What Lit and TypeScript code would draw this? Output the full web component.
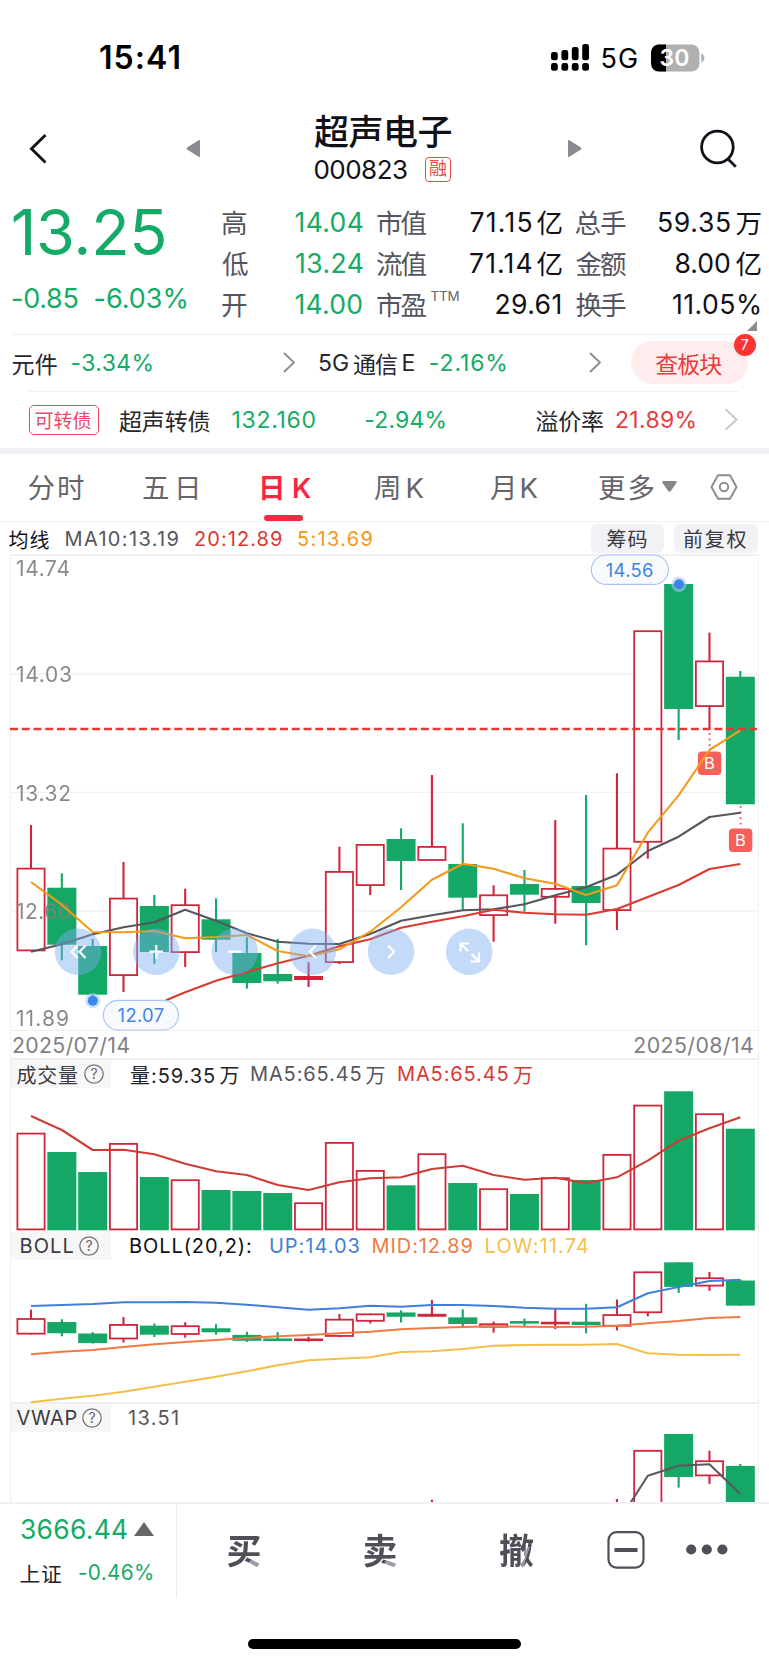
import { LitElement, html, svg, css } from "lit";
import { customElement, property } from "lit/decorators.js";

/* One line of text tracked so that its ink fills a given measure. */
@customElement("fit-text")
class FitText extends LitElement {
  @property() text = "";
  @property({ type: Number }) measure = 0;
  @property({ type: Number }) gap = 0;

  static styles = css`
    :host {
      display: block;
      flex: none;
      white-space: nowrap;
    }
  `;

  updated() {
    const ctx = document.createElement("canvas").getContext("2d")!;
    const cs = getComputedStyle(this);
    ctx.font = `${cs.fontWeight} ${cs.fontSize} ${cs.fontFamily}`;
    const m = ctx.measureText(this.text);
    const ink = m.actualBoundingBoxLeft + m.actualBoundingBoxRight;
    const n = Array.from(this.text).length;
    this.style.width = `${this.measure}px`;
    this.style.marginLeft = `${this.gap}px`;
    this.style.textIndent = `${m.actualBoundingBoxLeft}px`;
    this.style.letterSpacing = n > 1 ? `${(this.measure - ink) / (n - 1)}px` : "0";
  }

  render() {
    return html`${this.text}`;
  }
}

type Item = [string, number, number, string];

/* A run of texts; each item is [text, left, right, class]. */
const run = (items: Item[], start = 0) => {
  let end = start;
  return items.map(([text, l, r, cls]) => {
    const gap = l - end;
    end = r;
    return html`<fit-text class=${cls} .text=${text} .measure=${r - l} .gap=${gap}></fit-text>`;
  });
};

const UP = "#d0263c";
const DOWN = "#14a765";
const STEP = 30.84;
const cx = (i: number) => 31 + STEP * i;

/* rising?, body top, body bottom, high, low */
const CANDLES: [boolean, number, number, number, number][] = [
  [true, 867.7, 951.3, 825, 951.3],
  [false, 887.7, 944.7, 873.3, 960.3],
  [false, 946, 994.7, 939, 997],
  [true, 897.7, 976, 862, 992],
  [false, 906, 952, 895, 963.7],
  [true, 904.3, 953, 888.7, 967],
  [false, 919.3, 939.7, 898.3, 952],
  [false, 953, 983, 937.3, 988.7],
  [false, 974, 981.3, 939, 983.7],
  [true, 976, 980, 962.3, 987],
  [true, 871, 963, 846.7, 964],
  [true, 844, 886, 844, 895],
  [false, 839, 861, 828.3, 890],
  [true, 846, 860.9, 775, 860],
  [false, 864, 897.7, 823.3, 911],
  [true, 894.4, 916, 885.3, 941.7],
  [false, 884, 894.7, 870, 911.7],
  [true, 888, 897.7, 820, 923.7],
  [false, 886, 903, 795, 945.3],
  [true, 847.7, 911, 773.3, 930],
  [true, 630.3, 842.7, 631, 858.7],
  [false, 584, 709, 584, 740],
  [true, 660.5, 707, 632.7, 729],
  [false, 676.7, 804.3, 671, 804],
];

const MA5 = [882, 904.7, 932, 932.3, 931, 938.3, 937, 935, 951, 956.3, 949.3, 931.7, 907.3, 879.7, 863.7, 868.7, 878.3, 883.7, 895, 885.3, 832.7, 795.3, 750, 730.3];
const MA10 = [951.7, 944.3, 934.3, 927.3, 922.3, 909.7, 920.7, 933.3, 941.7, 943.7, 944, 934, 920.7, 915.3, 910.3, 909.3, 904.3, 895.3, 887.3, 874.7, 851, 836.7, 817, 812.7];
const MA20 = [992.3, 980.7, 972, 963.3, 955.7, 946.3, 939.3, 927.7, 921.7, 916.3, 909.7, 912.7, 914.3, 914.7, 909, 897, 885, 869, 864];

const VOLUME = [1132.7, 1152, 1172, 1143, 1177, 1179.3, 1190, 1191, 1193, 1202.3, 1142, 1170, 1185.3, 1153.3, 1183, 1188.3, 1194, 1177.3, 1180, 1154, 1104.7, 1091.3, 1113.3, 1128.7];
const VOLUME_MA = [1116, 1130, 1150, 1149.7, 1154.3, 1163.7, 1171.3, 1175, 1185, 1190, 1182.3, 1178.3, 1177.3, 1169, 1165.7, 1175, 1179.7, 1177.7, 1183, 1177.3, 1160.7, 1140.7, 1128.3, 1117.3];

const BOLL_UP = [1306, 1305, 1304, 1302.3, 1302.3, 1302, 1302.7, 1304.7, 1307.3, 1309.7, 1308.3, 1305.7, 1306.7, 1305, 1305, 1306, 1307.7, 1308.7, 1308.7, 1307.3, 1293.3, 1287, 1281, 1279.7];
const BOLL_MID = [1354.3, 1351.7, 1350, 1347, 1344.3, 1342, 1340, 1338, 1336.3, 1335, 1333.3, 1331.7, 1329.3, 1328, 1327, 1326.3, 1326.7, 1327, 1326.7, 1325.7, 1323.3, 1321, 1318, 1317];
const BOLL_LOW = [1402.3, 1398.7, 1395.7, 1391.7, 1386.7, 1381.7, 1376.7, 1371.3, 1365.3, 1360.3, 1358.7, 1357.3, 1352, 1351.3, 1349, 1345.7, 1345, 1344.7, 1344.7, 1344, 1353.3, 1354.7, 1355, 1354.7];

const path = (ys: number[], color: string, first = 0, head = "") => svg`
  <polyline points=${head + ys.map((y, i) => `${cx(i + first).toFixed(1)},${y}`).join(" ")}
    fill="none" stroke=${color} stroke-width="2.1" stroke-linejoin="round"></polyline>`;

const box = (i: number, rising: boolean, top: number, bottom: number) => {
  const x = cx(i) - 14.5;
  const h = bottom - top;
  if (rising && h > 4.2) {
    return svg`<rect x=${x + 0.9} y=${top + 0.9} width="27.2" height=${h - 1.8} fill="#fff" stroke=${UP} stroke-width="1.8"></rect>`;
  }
  const thick = Math.max(h, 2.6);
  return svg`<rect x=${x} y=${(top + bottom - thick) / 2} width="29" height=${thick} fill=${rising ? UP : DOWN}></rect>`;
};

const candles = (map: (y: number) => number) =>
  CANDLES.map(([rising, top, bottom, high, low], i) => svg`
    <path d="M${cx(i)} ${map(high)}V${map(low)}" stroke=${rising ? UP : DOWN} stroke-width="2.1"></path>
    ${box(i, rising, map(top), map(bottom))}`);

const label = (text: string, x: number, y: number, w: number, size: number, fill: string) => svg`
  <text x=${x} y=${y} textLength=${w} font-size=${size} fill=${fill}>${text}</text>`;

const TOOLS: [number, string][] = [
  [78, "M77.5 945.5L71.5 951.7L77.5 958M85.5 945.5L79.5 951.7L85.5 958"],
  [156.3, "M149.5 951.7H163M156.3 945V958.4"],
  [234.7, "M228 951.7H241.4"],
  [312.7, "M316 945.5L309.8 951.7L316 958"],
  [391, "M388 945.5L394 951.7L388 958"],
  [469.2, "M460.5 951.5V943.5H469M461 944L468 951M479 952.5V961.5H470.5M478.5 961L471.5 954"],
];

const marker = (x: number, y: number, from: number, to: number) => svg`
  <path d="M${x} ${from}V${to}" stroke="#ea4f4f" stroke-width="1.8" stroke-dasharray="1.8 3.8"></path>
  <rect x=${x - 11.7} y=${y} width="23.4" height="23.6" rx="4" fill="#f5605a"></rect>
  <text x=${x - 0.2} y=${y + 17.8} text-anchor="middle" font-size="16.5" fill="#fff">B</text>`;

const dot = (x: number, y: number) => svg`
  <circle cx=${x} cy=${y} r="7.6" fill="#a9caf8" fill-opacity=".6"></circle>
  <circle cx=${x} cy=${y} r="5" fill="#3b86ea"></circle>`;

const mainChart = html`
  <svg class="pane" viewBox="11 555 747 475" width="747" height="475">
    <path d="M11 674H758M11 792.4H758M11 911H758" stroke="#f2f2f2" stroke-width="1.3"></path>
    ${candles((y) => y)}
    <g opacity=".92">
      ${label("14.74", 16, 576, 54, 21, "#808080")}
      ${label("14.03", 16, 681.6, 56, 21, "#808080")}
      ${label("13.32", 16, 800.6, 55, 21, "#808080")}
      ${label("12.60", 16, 919.3, 55, 21, "#808080")}
      ${label("11.89", 16, 1025.5, 53, 21, "#808080")}
    </g>
    ${marker(709.6, 751.4, 733, 751)}
    ${marker(740.6, 828.4, 806, 828)}
    <path d="M10 729H757" stroke="#e23c32" stroke-width="2.4" stroke-dasharray="8 3.74"></path>
    ${path(MA10, "#55555d")}
    ${path(MA20, "#da3a30", 5, "166,1000.3 ")}
    ${path(MA5, "#f39a1b")}
    ${TOOLS.map(([x, d]) => svg`
      <circle cx=${x} cy="951.7" r="23.3" fill="#7cadf1" fill-opacity=".45"></circle>
      <path d=${d} fill="none" stroke="#fff" stroke-width="2.2"></path>`)}
    <rect x="591.4" y="555" width="77" height="29.4" rx="14.7" fill="#f8f9fb" stroke="#a5c5f3" stroke-width="1.1"></rect>
    ${label("14.56", 605.8, 577, 47.6, 18.4, "#3f86e4")}
    <rect x="103.4" y="1000.4" width="75" height="29.6" rx="14.8" fill="#f8f9fb" stroke="#a5c5f3" stroke-width="1.1"></rect>
    ${label("12.07", 117.6, 1022.3, 46.5, 18.4, "#3f86e4")}
    ${dot(679, 584.3)}${dot(92.8, 1000.7)}
  </svg>`;

const volumeChart = html`
  <svg class="pane" viewBox="11 1088 747 143" width="747" height="143">
    ${VOLUME.map((y, i) => box(i, CANDLES[i][0], y, 1230.3))}
    ${path(VOLUME_MA, "#cc3e34")}
  </svg>`;

const bollChart = html`
  <svg class="pane" viewBox="11 1260 747 142" width="747" height="142">
    ${candles((y) => 1262.3 + (y - 584) * 0.1967)}
    ${path(BOLL_UP, "#3f80da")}${path(BOLL_MID, "#ee7b45")}${path(BOLL_LOW, "#f4bf48")}
  </svg>`;

const vwapChart = html`
  <svg class="pane clip" viewBox="11 1432 747 70" width="747" height="70">
    ${candles((y) => 1434 + (y - 584) * 0.344)}
    ${path([1524, 1475.7, 1465.7, 1464.3, 1494], "#5a5a60", 19)}
  </svg>`;

const help = html`
  <svg class="help" width="20" height="20" viewBox="0 0 20 20">
    <circle cx="10" cy="10" r="9.2" fill="none" stroke="#77777b" stroke-width="1.3"></circle>
    <text x="10" y="15" text-anchor="middle" font-size="14" fill="#66666a">?</text>
  </svg>`;

const chevron = (cls: string) => html`
  <svg class="chev ${cls}" viewBox="0 0 12 21"><path d="M1 1L11 10.5L1 20"></path></svg>`;

@customElement("app-root")
class AppRoot extends LitElement {
  static styles = css`
    :host {
      display: block;
      width: 769px;
      height: 1665px;
      overflow: hidden;
      background: #fff;
      color: #101018;
      font-family: Inter, "Noto Sans CJK SC", sans-serif;
    }
    * { box-sizing: border-box; }
    svg { display: block; flex: none; font-family: inherit; }
    .row { display: flex; align-items: center; }
    .green { color: #14ab66; }
    .red { color: #e83c3c; }

    .status { height: 100px; padding-top: 15px; color: #000; }
    .clock { font-size: 32px; font-weight: 600; }
    .net { font-size: 27px; padding-top: 2px; }
    .signal { margin-left: 371px; }
    .battery { margin-left: 14px; }

    .nav { height: 97px; align-items: flex-start; }
    .back { margin: 33px 0 0 28px; }
    .prev { margin: 39px 0 0 138px; }
    .next { margin: 39px 0 0 116px; }
    .search { margin: 28px 0 0 116px; }
    .title { width: 138px; margin-left: 114px; padding-top: 13px; }
    .name { font-size: 35px; line-height: 38px; font-weight: 500; }
    .code { height: 36px; font-size: 26px; }
    .margin-tag { width: 26px; height: 25px; margin-left: 18px; border: 1.7px solid #ea4a4a; border-radius: 4px;
      color: #ea4a4a; font-size: 18px; line-height: 22px; text-align: center; }

    .quote { display: flex; height: 137px; }
    .price { width: 221px; padding-top: 3px; }
    .last { font-size: 63px; line-height: 64px; }
    .change { height: 69px; font-size: 27px; }
    .stats { padding-top: 4px; font-size: 26.6px; position: relative; }
    .stats .row { height: 41px; }
    .k { color: #55555f; }
    .sup { color: #66666e; font-size: 13.4px; align-self: flex-start; line-height: 26px; }
    .more-corner { position: absolute; left: 526px; top: 124px; }

    .sector { height: 57px; margin-left: 12px; width: 745px; border-top: 1px solid #eee; font-size: 23px; color: #26262c; padding-bottom: 1px; }
    .chev { width: 12px; height: 21px; fill: none; stroke: #8a8a90; stroke-width: 1.8; }
    .c1 { margin-left: 131.5px; }
    .c2 { margin-left: 83.5px; }
    .check { position: relative; width: 117px; height: 43px; margin-left: 30px; border-radius: 22px; background: #ffecec; }
    .count { position: absolute; right: -8px; top: -7px; width: 22px; height: 22px; border-radius: 50%; background: #fd3434;
      color: #fff; font-size: 14px; line-height: 22px; text-align: center; }
    .bond { height: 57px; margin-left: 29px; width: 709px; border-top: 1px solid #eee; font-size: 23px; color: #26262c; padding-bottom: 1px; }
    .bond-tag { width: 70px; height: 30px; border: 1.6px solid #ec4868; border-radius: 5px; color: #ec4868; font-size: 19px; }
    .c3 { width: 14px; height: 23px; margin-left: 29.5px; stroke: #c8c8cc; }
    .band { height: 6px; background: #f0f0f7; }

    .tabs { height: 68px; font-size: 27.5px; color: #66666a; align-items: flex-start; padding-top: 14px; line-height: 40px;
      border-bottom: 1px solid #f0f0f0; }
    .on { color: #fb2742; font-weight: 600; }
    .tab-on { width: 50px; margin-left: 65px; }
    .bar { width: 39px; height: 6px; margin: 7px 0 0 2px; border-radius: 3px; background: #fb2742; }
    .drop { margin: 13px 0 0 8px; }
    .gear { margin: 6px 0 0 33px; }

    .legend { height: 33px; padding-top: 1px; font-size: 20px; }
    .strong { color: #101018; }
    .gray { color: #55555d; }
    .orange { color: #f0981c; }
    .lred { color: #d83a32; }
    .btn { display: flex; align-items: center; height: 29px; margin-top: -1px; border-radius: 6px; background: #f1f1f6; color: #3a3a40; }
    .chips { width: 73px; margin-left: 218px; }
    .adj { width: 84px; margin-left: 10px; }

    .charts { width: 749px; margin-left: 10px; border: 1px solid #f0f0f0; border-width: 0 1px; }
    .frame { border-top: 2px solid #f1f1f1; margin-top: -1px; margin-bottom: -1px; }
    .pane { overflow: visible; }
    .clip { overflow: hidden; }
    .dates { height: 30px; padding-top: 1px; border: 0 solid #efefef; border-width: 1px 0 2px; font-size: 21.3px; color: #808086; }
    .head { height: 28px; font-size: 20px; color: #333338; }
    .mt { margin-top: 1px; }
    .tag { height: 28px; width: 100px; background: #f7f7f7; color: #3c3c42; }
    .help { margin-left: 5.5px; }
    .ink { color: #222228; }
    .blue { color: #3f80da; }
    .mid { color: #ee7b45; }
    .low { color: #f4bf48; }
    .vw { border-top: 2px solid #efeff1; height: 30px; }

    .dock { display: flex; height: 96px; border-top: 2px solid #f1f1f3; }
    .index { width: 177px; border-right: 1px solid #ebebed; }
    .idx { height: 50px; font-size: 26.5px; }
    .sub { height: 37px; font-size: 20.8px; }
    .tri { margin-left: 6.5px; }
    .act { font-size: 35px; font-weight: 700; line-height: 95px; color: transparent; -webkit-background-clip: text; background-clip: text; }
    .buy { background-image: radial-gradient(ellipse 9px 7px at 29px 61px, #9c9ca6 0 94%, #4f4f5a 100%); }
    .pull { background-image: linear-gradient(108deg, transparent 0 62%, #9c9ca6 63% 72%, transparent 73%), linear-gradient(#4f4f5a, #4f4f5a);
      background-size: 100% 23px, auto; background-position: 0 43px, 0 0; background-repeat: no-repeat; }
    .minus { margin: 27px 0 0 73px; }
    .dots { margin: 39.5px 0 0 41px; }
    .home { width: 273px; height: 10px; margin: 41px 0 0 248px; border-radius: 5px; background: #000; }
  `;

  render() {
    return html`
      <div class="status row">
        ${run([["15:41", 100, 179.5, "clock"]])}
        <svg class="signal" width="38" height="28" viewBox="0 0 38 28">
          ${[8, 6, 3, 0].map((y, i) => svg`
            <rect x=${i * 10.4} y=${y} width="6.8" height=${16.3 - y} rx="2.4"></rect>
            <rect x=${i * 10.4} y="19" width="6.8" height="7.8" rx="2.4"></rect>`)}
        </svg>
        ${run([["5G", 602.5, 637, "net"]], 588.5)}
        <svg class="battery" width="54" height="28" viewBox="0 0 54 28">
          <clipPath id="b"><rect y="0.5" width="48.5" height="27" rx="8"></rect></clipPath>
          <g clip-path="url(#b)"><rect width="54" height="28" fill="#b0b0b0"></rect><rect width="15" height="28"></rect></g>
          <path d="M50.2 9.5Q53.4 11 53.4 14T50.2 18.5Z" fill="#b0b0b0"></path>
          <text x="8.4" y="22.3" font-size="23" font-weight="600" fill="#fff" textLength="30">30</text>
        </svg>
      </div>

      <div class="nav row">
        <svg class="back" width="20" height="32" viewBox="0 0 20 32"><path d="M17.5 2L3.5 15.8L17.5 29.5" fill="none" stroke="#101018" stroke-width="2.9"></path></svg>
        <svg class="prev" width="14" height="19" viewBox="0 0 14 19"><path d="M13 1Q14 .6 14 2V17Q14 18.4 13 18L1 10.5Q0 9.5 1 8.5Z" fill="#8b8b92"></path></svg>
        <div class="title">
          <div>${run([["超声电子", 0, 137.5, "name"]])}</div>
          <div class="code row">${run([["000823", 0.5, 93, ""]])}<div class="margin-tag">融</div></div>
        </div>
        <svg class="next" width="14" height="19" viewBox="0 0 14 19"><path d="M1 1Q0 .6 0 2V17Q0 18.4 1 18L13 10.5Q14 9.5 13 8.5Z" fill="#8b8b92"></path></svg>
        <svg class="search" width="40" height="42" viewBox="0 0 40 42"><g fill="none" stroke="#101018" stroke-width="2.8">
          <circle cx="19.4" cy="19" r="15.8"></circle><path d="M30 31L37.8 38.8"></path></g></svg>
      </div>

      <div class="quote">
        <div class="price green">
          ${run([["13.25", 12.7, 164.3, "last"]])}
          <div class="change row">${run([["-0.85", 12, 77.5, ""], ["-6.03%", 94.5, 186.5, ""]])}</div>
        </div>
        <div class="stats">
          <div class="row">${run([
            ["高", 222, 246, "k"], ["14.04", 295.5, 362.7, "green"], ["市值", 377, 426.5, "k"],
            ["71.15", 470.5, 531.5, ""], ["亿", 536.5, 562, ""], ["总手", 575.5, 626, "k"], ["59.35", 659, 730, ""], ["万", 735.5, 760, ""],
          ], 221)}</div>
          <div class="row">${run([
            ["低", 222, 246, "k"], ["13.24", 296, 362.7, "green"], ["流值", 377, 426.5, "k"],
            ["71.14", 470, 531.5, ""], ["亿", 536.5, 562, ""], ["金额", 575.5, 626, "k"], ["8.00", 675.5, 730, ""], ["亿", 735.5, 760.5, ""],
          ], 221)}</div>
          <div class="row">${run([
            ["开", 222, 246, "k"], ["14.00", 295.5, 362.3, "green"], ["市盈", 377, 426.5, "k"], ["TTM", 430.5, 458.5, "sup"],
            ["29.61", 495.5, 560.5, ""], ["换手", 575.5, 626, "k"], ["11.05%", 673, 760, ""],
          ], 221)}</div>
          <svg class="more-corner" width="10" height="10"><path d="M10 0V10H0Z" fill="#8b8b92"></path></svg>
        </div>
      </div>

      <div class="sector row">
        ${run([["元件", 12.5, 56.7, ""], ["-3.34%", 71.5, 151.5, "green"]], 12)}
        ${chevron("c1")}
        ${run([["5G", 319, 348, ""], ["通信", 353, 397, ""], ["E", 403.5, 413.5, ""], ["-2.16%", 429.8, 505.3, "green"]], 295)}
        ${chevron("c2")}
        <div class="check row red">
          ${run([["查板块", 24.5, 91.5, ""]])}
          <div class="count">7</div>
        </div>
      </div>
      <div class="bond row">
        <div class="bond-tag row">${run([["可转债", 34.5, 90.5, ""]], 29)}</div>
        ${run([["超声转债", 119.5, 210, ""], ["132.160", 233, 316, "green"], ["-2.94%", 365.7, 445, "green"], ["溢价率", 536, 603.5, ""], ["21.89%", 616.5, 695, "red"]], 99)}
        ${chevron("c3")}
      </div>
      <div class="band"></div>

      <div class="tabs row">
        ${run([["分时", 28.5, 84, ""], ["五日", 143, 197, ""]])}
        <div class="tab-on on">
          <div class="row">${run([["日", 262, 283, ""], ["K", 294, 312, ""]], 262)}</div>
          <div class="bar"></div>
        </div>
        ${run([["周", 374, 399, ""], ["K", 407.5, 424, ""], ["月", 490, 511, ""], ["K", 521.5, 538, ""], ["更多", 599, 653.5, ""]], 312)}
        <svg class="drop" width="15" height="11" viewBox="0 0 15 11"><path d="M1.5 0H13.5Q15.4 .3 14.4 2L8.8 10Q7.5 11.6 6.2 10L.6 2Q-.4 .3 1.5 0Z" fill="#85858a"></path></svg>
        <svg class="gear" width="28" height="26" viewBox="0 0 28 26"><g fill="none" stroke="#8a8a90" stroke-width="1.9">
          <path d="M8 1.2H20L26.5 13L20 24.8H8L1.5 13Z" stroke-linejoin="round"></path><circle cx="14" cy="13" r="4.2"></circle></g></svg>
      </div>

      <div class="legend row">
        ${run([["均线", 8.5, 49.5, "strong"], ["MA10:13.19", 65.5, 178.5, "gray"], ["20:12.89", 195, 282, "lred"], ["5:13.69", 298, 372.5, "orange"]])}
        <div class="btn chips">${run([["筹码", 16, 56, ""]])}</div>
        <div class="btn adj">${run([["前复权", 10.5, 73, ""]])}</div>
      </div>

      <div class="charts">
        <div class="frame"></div>
        ${mainChart}
        <div class="dates row">${run([["2025/07/14", 13, 129.3, ""], ["2025/08/14", 634.3, 753, ""]], 11)}</div>
        <div class="head row">
          <div class="tag row">${run([["成交量", 16.5, 78, ""]], 11)}${help}</div>
          ${run([["量:59.35", 130, 214, "ink"], ["万", 219.5, 238.5, "ink"], ["MA5:65.45", 251, 360.5, "gray"], ["万", 365.5, 384.5, "gray"], ["MA5:65.45", 398, 507.5, "lred"], ["万", 513, 531.5, "lred"]], 111)}
        </div>
        ${volumeChart}
        <div class="head mt row">
          <div class="tag row">${run([["BOLL", 20.5, 73.5, ""]], 11)}${help}</div>
          ${run([["BOLL(20,2):", 130, 251, "strong"], ["UP:14.03", 270, 359.5, "blue"], ["MID:12.89", 372.5, 472.5, "mid"], ["LOW:11.74", 485.5, 588, "low"]], 111)}
        </div>
        ${bollChart}
        <div class="head vw row">
          <div class="tag row">${run([["VWAP", 16.5, 76.5, ""]], 11)}${help}</div>
          ${run([["13.51", 128, 178, "gray"]], 111)}
        </div>
        ${vwapChart}
      </div>

      <div class="dock">
        <div class="index">
          <div class="idx row green">${run([["3666.44", 21, 127, ""]])}
            <svg class="tri" width="20" height="14" viewBox="0 0 20 14"><path d="M10 0L20 14H0Z" fill="#66666a"></path></svg>
          </div>
          <div class="sub row">${run([["上证", 20.5, 61, "ink"], ["-0.46%", 79, 153, "green"]])}</div>
        </div>
        ${run([["买", 227.5, 262, "act buy"], ["卖", 363.5, 398, "act buy"], ["撤", 499, 534, "act pull"]], 177)}
        <svg class="minus" width="38" height="38" viewBox="0 0 38 38"><rect x="1.5" y="1.2" width="35" height="35.4" rx="8" fill="none" stroke="#4f4f5a" stroke-width="2.2"></rect>
          <path d="M7.5 19H30.5" stroke="#4f4f5a" stroke-width="4"></path></svg>
        <svg class="dots" width="42" height="11" viewBox="0 0 42 11">${[5.2, 20.8, 36.4].map((x) => svg`<circle cx=${x} cy="5.5" r="5.1" fill="#4f4f5a"></circle>`)}</svg>
      </div>
      <div class="home"></div>
    `;
  }
}
